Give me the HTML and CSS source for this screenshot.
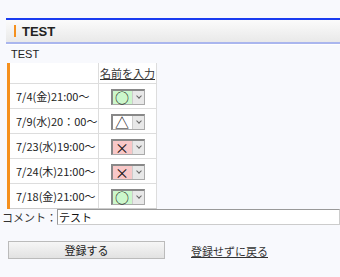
FILE: index.html
```html
<!DOCTYPE html>
<html lang="ja">
<head>
<meta charset="utf-8">
<link rel="stylesheet" href="styles.css">
</head>
<body>
<div class="page">
  <div class="title-bar"><span class="mark"></span><span class="title">TEST</span></div>
  <p class="desc">TEST</p>
  <table class="sched">
    <tr class="head"><td class="date"></td><td class="ans"><a href="#" class="name">名前を入力</a></td></tr>
    <tr><td class="date">7/4(金)21:00～</td><td class="ans"><span class="sel ok"><span class="val">○</span><span class="arr"></span></span></td></tr>
    <tr><td class="date">7/9(水)20：00～</td><td class="ans"><span class="sel maybe"><span class="val">△</span><span class="arr"></span></span></td></tr>
    <tr><td class="date">7/23(水)19:00～</td><td class="ans"><span class="sel ng"><span class="val">×</span><span class="arr"></span></span></td></tr>
    <tr><td class="date">7/24(木)21:00～</td><td class="ans"><span class="sel ng"><span class="val">×</span><span class="arr"></span></span></td></tr>
    <tr><td class="date">7/18(金)21:00～</td><td class="ans"><span class="sel ok"><span class="val">○</span><span class="arr"></span></span></td></tr>
  </table>
  <div class="comment"><span class="label">コメント：</span><span class="input">テスト</span></div>
  <div class="actions"><span class="btn">登録する</span><a href="#" class="back">登録せずに戻る</a></div>
</div>
</body>
</html>
```
FILE: styles.css
```css
html, body { margin: 0; padding: 0; }
body {
  background: #f8f9fd;
  font-family: "Noto Sans CJK JP", "Noto Sans", sans-serif;
  color: #222;
  width: 340px;
  height: 277px;
  overflow: hidden;
}
.page { padding-top: 18px; }
.title-bar {
  margin-left: 6px;
  border-top: 2px solid #1a3cf0;
  border-bottom: 2px solid #aab6ee;
  height: 22px;
  background: linear-gradient(#fbfbfb, #e9e9e9);
  display: flex;
  align-items: center;
  box-shadow: 0 1px 0 #fff;
}
.mark { width: 2px; height: 12px; background: #f5901e; margin-left: 8px; margin-right: 6px; }
.title { font-family: "Liberation Sans", Arial, sans-serif; font-weight: bold; font-size: 13px; color: #222; }
.desc { margin: 3px 0 0 11px; font-family: "Liberation Sans", Arial, sans-serif; font-size: 11px; height: 14px; line-height: 14px; color: #222; }
.sched {
  margin: 2px 0 0 7px;
  border-collapse: collapse;
  background: #fff;
  border-left: 3px solid #f5901e;
  table-layout: fixed;
  width: 150px;
}
.sched td { border: 1px solid #ddd; padding: 0; font-size: 11px; height: 24px; white-space: nowrap; overflow: hidden; }
.sched td.date { width: 82px; padding-left: 6px; }
.sched td.ans { width: 57px; text-align: center; }
.sched tr.head td { border-top: none; height: 20px; }
.sched tr:last-child td { border-bottom: 1px solid #ccc; }
.name { color: #333; font-size: 11px; text-decoration: underline; }
.sel {
  display: inline-flex;
  width: 34px;
  height: 16px;
  border: 1px solid #aaa;
  border-top: 2px solid #888;
  border-left: 2px solid #888;
  vertical-align: middle;
  box-sizing: border-box;
  background: #eee;
  margin-top: 1px;
}
.sel .val { width: 19px; font-size: 14px; line-height: 12px; text-align: center; color: #111; }
.sel.ok .val { background: #ccf7cc; }
.sel.ng .val { background: #f8c8c8; }
.sel.maybe .val { background: #fff; }
.sel .arr { flex: 1; position: relative; border-left: 1px solid #ccc; background: #e8e8e8; }
.sel .arr::after {
  content: ""; position: absolute; left: 4px; top: 3px; width: 3px; height: 3px;
  border-right: 1px solid #666; border-bottom: 1px solid #666; transform: rotate(45deg);
}
.comment { display: flex; align-items: center; margin-top: 0; padding-left: 2px; font-size: 11px; }
.label { color: #333; }
.input {
  flex: 1; height: 16px; line-height: 15px; border: 1px solid #ccc; border-top-color: #999; border-left-color: #999;
  background: #fff; padding-left: 1px; box-sizing: border-box; color: #111;
}
.actions { display: flex; align-items: center; margin-top: 16px; padding-left: 8px; font-size: 11px; }
.btn {
  width: 157px; height: 18px; box-sizing: border-box; border: 1px solid #bbb;
  background: linear-gradient(#f6f6f6, #e2e2e2); text-align: center; line-height: 16px; color: #222;
}
.back { margin-left: 26px; color: #333; text-decoration: underline; margin-top: 2px; }
```
